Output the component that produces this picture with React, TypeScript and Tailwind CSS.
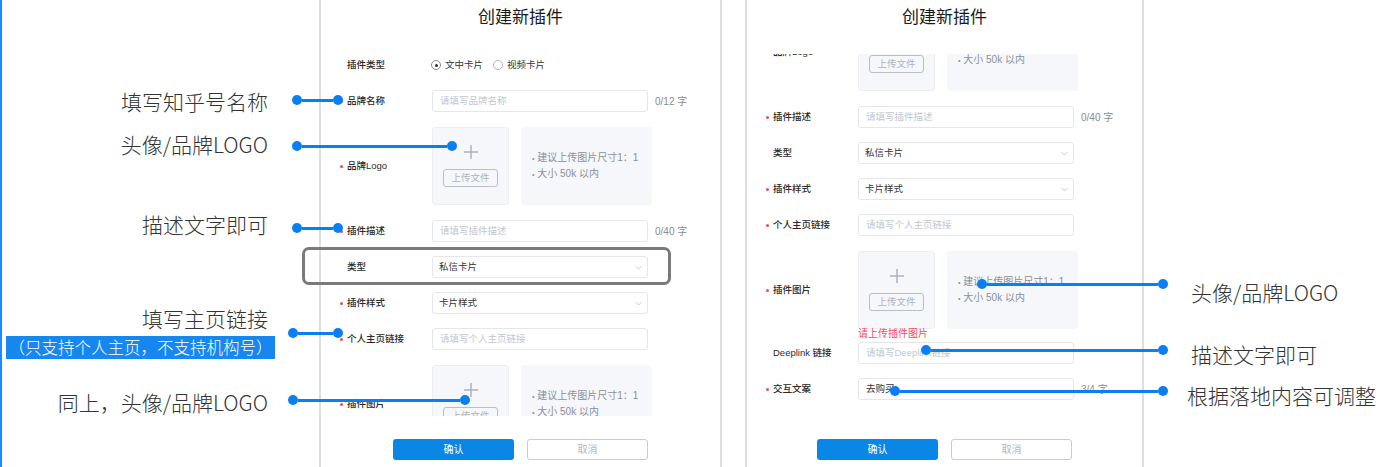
import type { ReactNode } from 'react';

const FONT = "font-['Liberation_Sans','Noto_Sans_CJK_SC',sans-serif]";
const NOTE_FONT = "font-['Noto_Sans_CJK_SC',sans-serif]";

function RequiredDot({ on }: { on?: boolean }) {
  return (
    <div className="flex w-[9px] shrink-0 items-center pl-[2px]">
      {on && <span className="h-[3px] w-[3px] rounded-full bg-[#f5475b]" />}
    </div>
  );
}

function Field({
  label,
  required,
  tall,
  children,
}: {
  label: string;
  required?: boolean;
  tall?: boolean;
  children: ReactNode;
}) {
  return (
    <div className={tall ? 'flex h-[80px] items-center' : 'flex h-[22px] items-center'}>
      <RequiredDot on={required} />
      <div className="w-[85px] shrink-0 text-[9.5px] font-medium text-[#2a2a2a]">{label}</div>
      {children}
    </div>
  );
}

function TextInput({ placeholder, value }: { placeholder: string; value?: string }) {
  return (
    <div className="flex h-[22px] w-[216px] shrink-0 items-center rounded-[3px] border border-[#e4e6eb] bg-white px-[7px] text-[9.5px]">
      {value ? (
        <span className="text-[#333]">{value}</span>
      ) : (
        <span className="text-[#c3c7cf]">{placeholder}</span>
      )}
    </div>
  );
}

function Counter({ text }: { text: string }) {
  return <span className="ml-[7px] text-[10px] text-[#8c8c8c]">{text}</span>;
}

function Select({ value }: { value: string }) {
  return (
    <div className="flex h-[22px] w-[216px] shrink-0 items-center justify-between rounded-[3px] border border-[#e4e6eb] bg-white pl-[6px] pr-[5px] text-[9.5px] text-[#333]">
      <span>{value}</span>
      <svg width="7" height="5" viewBox="0 0 7 5" fill="none">
        <path d="M0.5 1 3.5 4 6.5 1" stroke="#bfc3ca" strokeWidth="0.9" />
      </svg>
    </div>
  );
}

function Upload() {
  return (
    <div className="flex items-center gap-[12px]">
      <div className="flex h-[78px] w-[77px] shrink-0 flex-col items-center justify-center gap-[10px] rounded-[3px] border border-[#eceef2] bg-[#f6f7fa]">
        <svg width="14" height="14" viewBox="0 0 14 14">
          <path d="M7 0v14M0 7h14" stroke="#aeb3bd" strokeWidth="1.5" />
        </svg>
        <div className="flex h-[18px] w-[55px] items-center justify-center rounded-[3px] border border-[#b9bec8] text-[9.5px] text-[#aeb3bc]">
          上传文件
        </div>
      </div>
      <div className="flex h-[78px] w-[131px] shrink-0 flex-col justify-center rounded-[3px] bg-[#f6f7fa] pl-[11px] text-[10px] leading-[15px] text-[#8a8f99]">
        <div>
          <span className="text-[7px]">•</span> 建议上传图片尺寸1：1
        </div>
        <div>
          <span className="text-[7px]">•</span> 大小 50k 以内
        </div>
      </div>
    </div>
  );
}

function PluginForm({ scrolled, error }: { scrolled?: boolean; error?: boolean }) {
  return (
    <div className="h-[362px] shrink-0 overflow-hidden">
      <div
        className={
          scrolled
            ? '-mt-[114px] flex flex-col gap-[14px] pl-[17px]'
            : 'flex flex-col gap-[14px] pl-[17px]'
        }
      >
        <Field label="插件类型">
          <div className="-ml-px flex items-center gap-[4px] text-[9.5px] text-[#333]">
            <span className="flex h-[10px] w-[10px] items-center justify-center rounded-full border border-[#8c8c8c]">
              <span className="h-[3px] w-[3px] rounded-full bg-[#333]" />
            </span>
            <span>文中卡片</span>
            <span className="ml-[6px] h-[10px] w-[10px] rounded-full border border-[#b5b5b5]" />
            <span>视频卡片</span>
          </div>
        </Field>
        <Field label="品牌名称" required>
          <TextInput placeholder="请填写品牌名称" />
          <Counter text="0/12 字" />
        </Field>
        <Field label="品牌Logo" required tall>
          <Upload />
        </Field>
        <Field label="插件描述" required>
          <TextInput placeholder="请填写插件描述" />
          <Counter text="0/40 字" />
        </Field>
        <Field label="类型">
          <Select value="私信卡片" />
        </Field>
        <Field label="插件样式" required>
          <Select value="卡片样式" />
        </Field>
        <Field label="个人主页链接" required>
          <TextInput placeholder="请填写个人主页链接" />
        </Field>
        <div>
          <Field label="插件图片" required tall>
            <Upload />
          </Field>
          {error && (
            <div className="-mt-[2px] h-0 pl-[94px] text-[10px] leading-[12px] text-[#f5475b]">
              请上传插件图片
            </div>
          )}
        </div>
        <Field label="Deeplink 链接">
          <TextInput placeholder="请填写Deeplink链接" />
        </Field>
        <Field label="交互文案" required>
          <TextInput placeholder="请填写交互文案" value="去购买" />
          <Counter text="3/4 字" />
        </Field>
      </div>
    </div>
  );
}

function Panel({ className, scrolled, error }: { className: string; scrolled?: boolean; error?: boolean }) {
  return (
    <div className={`flex h-full shrink-0 flex-col border-x-2 border-[#dedede] bg-white ${className}`}>
      <div className="flex h-[54px] shrink-0 justify-center pt-[6px] text-[17px] leading-[24px] text-[#1a1a1a]">
        创建新插件
      </div>
      <PluginForm scrolled={scrolled} error={error} />
      <div className="flex justify-center gap-[13px] pt-[23px]">
        <button className="h-[21px] w-[121px] rounded-[3px] bg-[#0a86e6] text-[10px] text-white">确认</button>
        <button className="h-[21px] w-[121px] rounded-[3px] border border-[#c8ccd5] bg-white text-[10px] text-[#b3b7bf]">
          取消
        </button>
      </div>
    </div>
  );
}

function Dot() {
  return <span className="h-[10px] w-[10px] shrink-0 rounded-full bg-[#0b7ff2]" />;
}

// 标注连线（两端圆点）
function Connector({ className }: { className: string }) {
  return (
    <div className={`absolute flex h-[10px] items-center ${className}`}>
      <Dot />
      <span className="h-[3px] flex-1 bg-[#0b7ff2]" />
      <Dot />
    </div>
  );
}

export default function App() {
  return (
    <div className={`relative flex h-[467px] w-[1385px] overflow-hidden bg-white ${FONT}`}>
      <div className="h-full w-[2px] shrink-0 bg-[#1a8cff]" />

      {/* 左侧说明 */}
      <div
        className={`flex w-[317px] shrink-0 flex-col whitespace-nowrap text-[21px] font-light leading-[24px] text-[#333] ${NOTE_FONT}`}
      >
        <div className="mt-[89px] pr-[51px] text-right">填写知乎号名称</div>
        <div className="mt-[19px] pr-[51px] text-right">头像/品牌LOGO</div>
        <div className="mt-[56px] pr-[51px] text-right">描述文字即可</div>
        <div className="mt-[70px] pr-[51px] text-right">填写主页链接</div>
        <div className="mt-[6px] ml-[4px] h-[23px] w-[269px] bg-[#1787f0] text-center text-[16.5px] leading-[23px] text-white">
          （只支持个人主页，不支持机构号）
        </div>
        <div className="mt-[31px] pr-[51px] text-right">同上，头像/品牌LOGO</div>
      </div>

      <Panel className="w-[403px]" />
      <Panel className="ml-[23px] w-[399px]" scrolled error />

      {/* 右侧说明 */}
      <div
        className={`flex flex-1 flex-col whitespace-nowrap text-[21px] font-light leading-[24px] text-[#333] ${NOTE_FONT}`}
      >
        <div className="mt-[280px] pl-[47px]">头像/品牌LOGO</div>
        <div className="mt-[38px] pl-[47px]">描述文字即可</div>
        <div className="mt-[17px] pl-[43px]">根据落地内容可调整</div>
      </div>

      {/* 高亮框 */}
      <div className="absolute left-[302px] top-[247px] h-[38px] w-[369px] rounded-[7px] border-[3px] border-[#7a7a7a]" />

      <Connector className="left-[292px] top-[95px] w-[51px]" />
      <Connector className="left-[292px] top-[141px] w-[165px]" />
      <Connector className="left-[292px] top-[223px] w-[51px]" />
      <Connector className="left-[288px] top-[328px] w-[55px]" />
      <Connector className="left-[288px] top-[395px] w-[182px]" />
      <Connector className="left-[977px] top-[279px] w-[191px]" />
      <Connector className="left-[921px] top-[345px] w-[247px]" />
      <Connector className="left-[890px] top-[386px] w-[278px]" />
    </div>
  );
}
